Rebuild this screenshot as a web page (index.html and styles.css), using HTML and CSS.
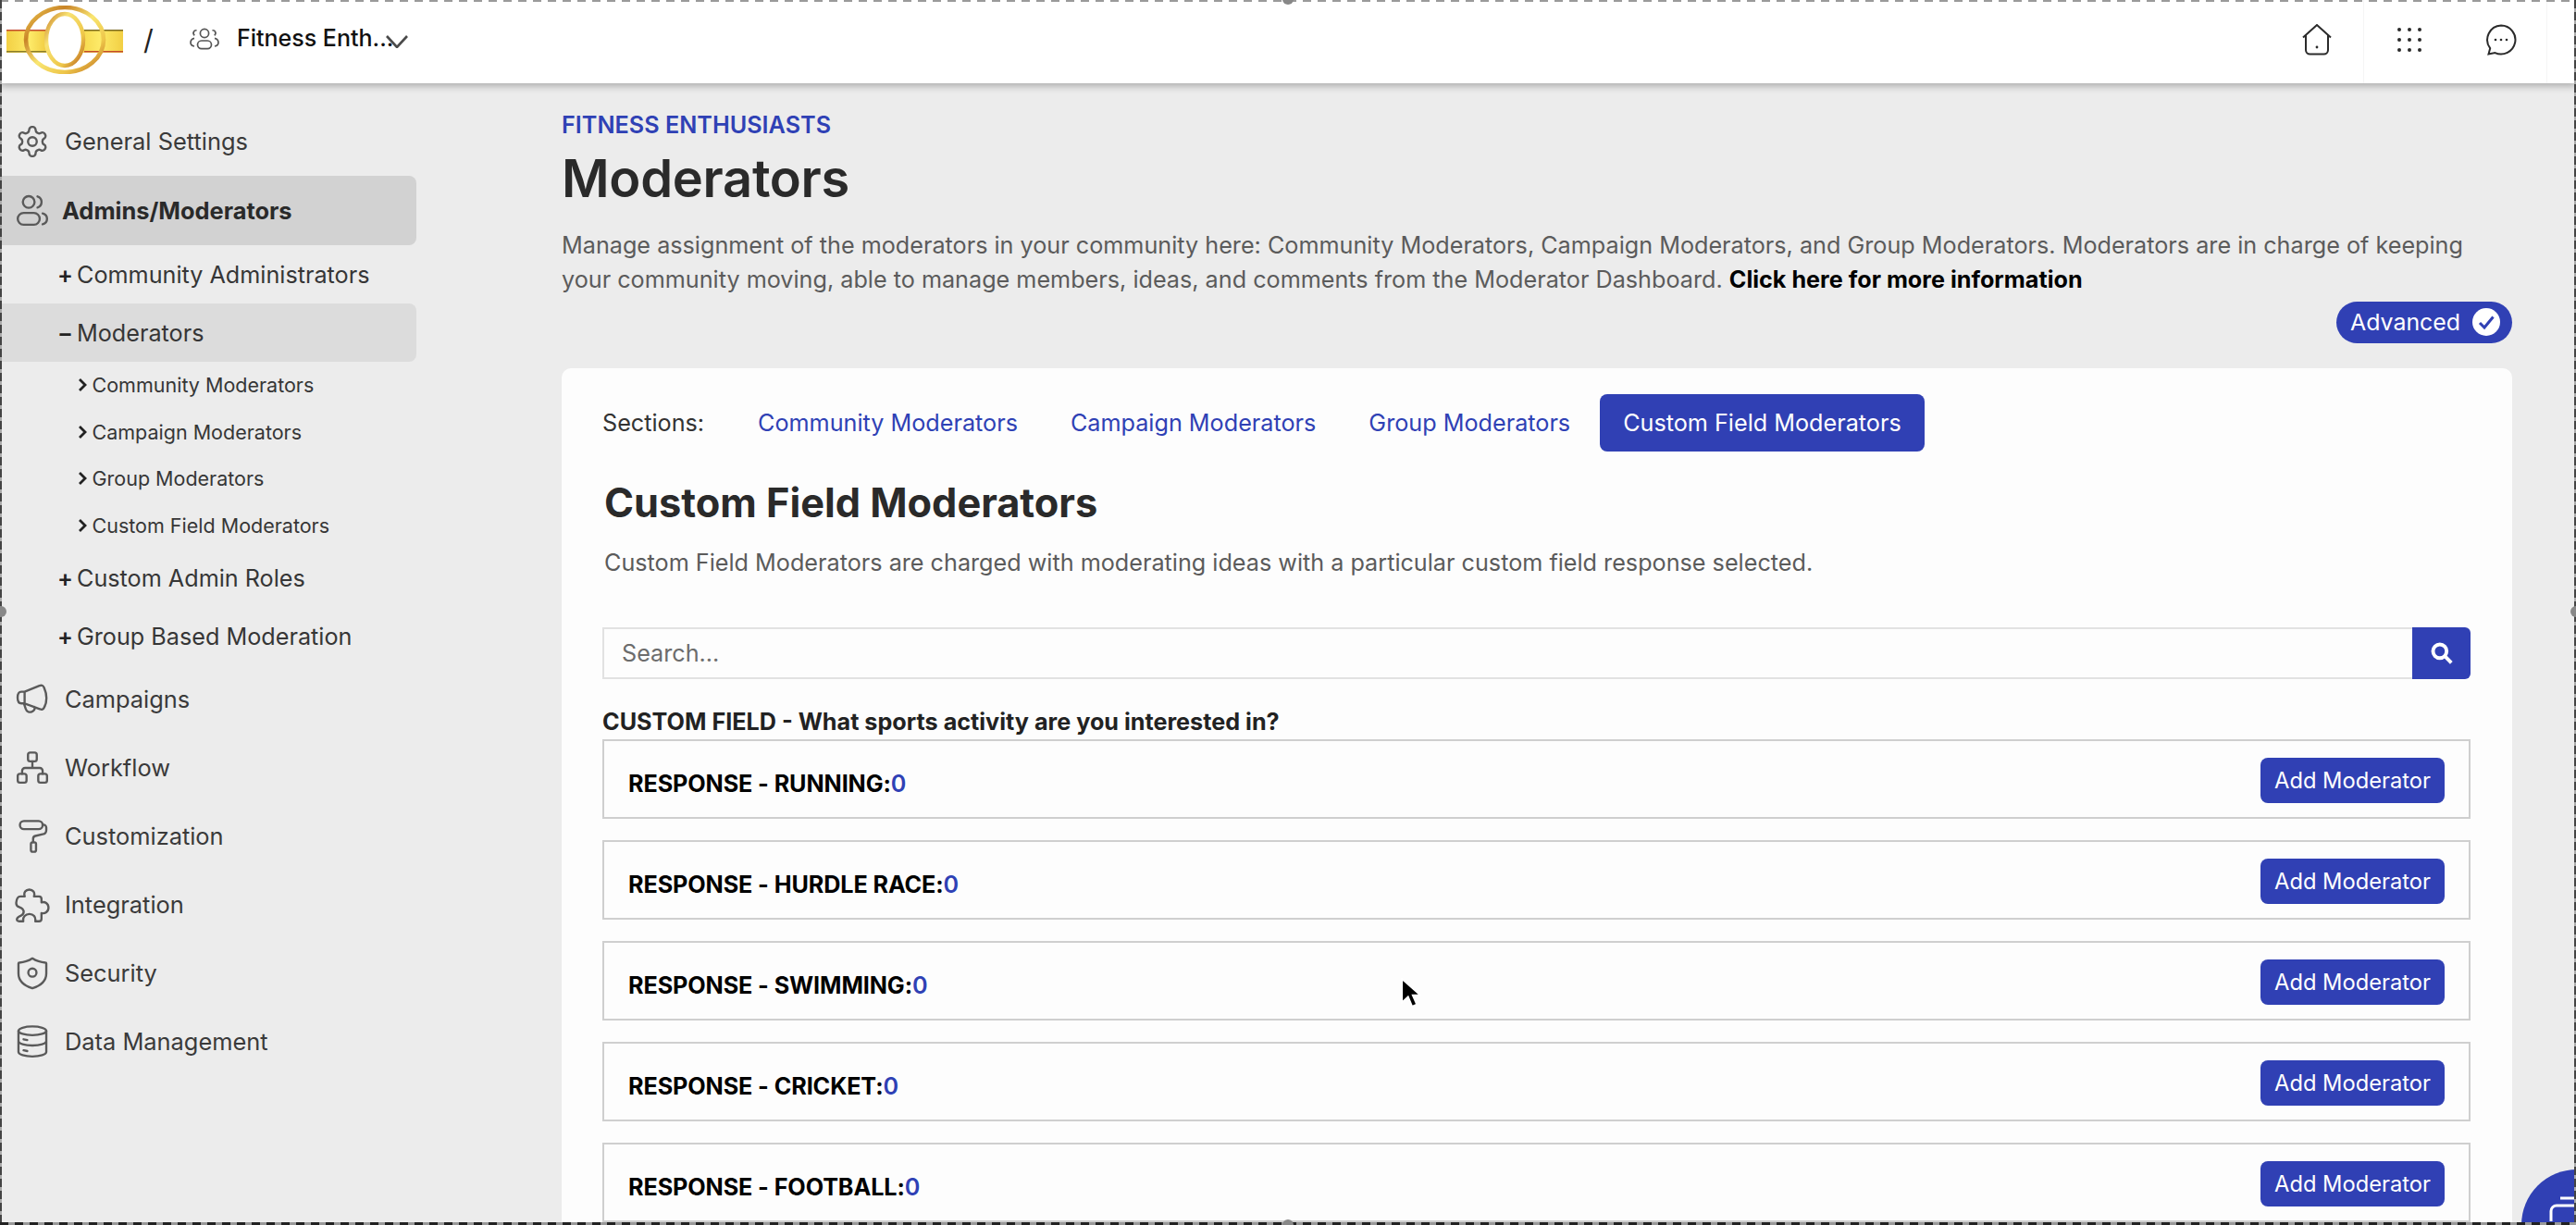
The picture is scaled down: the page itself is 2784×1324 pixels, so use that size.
FILE: index.html
```html
<!DOCTYPE html>
<html lang="en">
<head>
<meta charset="utf-8">
<title>Moderators</title>
<link rel="stylesheet" href="styles.css">
</head>
<body>
<div class="app">
  <header class="topbar">
    <div class="brand">
      <svg class="logo" viewBox="0 0 126 74" aria-hidden="true">
        <defs>
          <linearGradient id="band" x1="0" y1="0" x2="1" y2="0"><stop offset="0" stop-color="#f3d044"/><stop offset=".2" stop-color="#fdea68"/><stop offset=".33" stop-color="#f2cf46"/><stop offset=".66" stop-color="#f6da50"/><stop offset=".8" stop-color="#fdea68"/><stop offset="1" stop-color="#f2cf44"/></linearGradient>
          <linearGradient id="inner" x1="0" y1="0" x2="1" y2="1"><stop offset="0" stop-color="#c9822a"/><stop offset=".3" stop-color="#f8e272"/><stop offset=".7" stop-color="#eec74a"/><stop offset="1" stop-color="#b8611c"/></linearGradient>
          <linearGradient id="outer" x1="0" y1="0" x2="1" y2="1"><stop offset="0" stop-color="#f0cf55"/><stop offset=".25" stop-color="#c98428"/><stop offset=".5" stop-color="#f9e672"/><stop offset=".75" stop-color="#eec64a"/><stop offset="1" stop-color="#bd6c20"/></linearGradient>
        </defs>
        <rect x="0" y="26" width="126" height="25" fill="url(#band)"/>
        <rect x="0" y="26" width="43" height="1.500" fill="#c44b2c"/>
        <rect x="84" y="26" width="42" height="1.500" fill="#7c6a1e"/>
        <rect x="84" y="49" width="42" height="1.500" fill="#c44b2c"/>
        <rect x="0" y="49" width="43" height="1.500" fill="#8a7d2a"/>
        <ellipse cx="63" cy="37" rx="42" ry="35" fill="none" stroke="url(#outer)" stroke-width="4.600"/>
        <ellipse cx="63" cy="37" rx="20" ry="28" fill="#fff" stroke="url(#inner)" stroke-width="4.400"/>
      </svg>
      <span class="slash">/</span>
      <svg class="ico-group" viewBox="0 0 32 24" aria-hidden="true">
        <circle cx="16" cy="6" r="4.600"/><rect x="8.500" y="14" width="15" height="8.600" rx="4.300"/>
        <path d="M7.500 2.800a3 3 0 0 0-2.200 5.400M24.500 2.800a3 3 0 0 1 2.200 5.400M5 11.400C2.400 12 1 14 1 16c0 2 1.400 3.600 4 4M27 11.400c2.600.6 4 2.600 4 4.600 0 2-1.400 3.600-4 4"/>
      </svg>
      <span class="community">Fitness Enth...</span>
      <svg class="chev" viewBox="0 0 24 14" aria-hidden="true"><path d="M1 1l11 12L23 1"/></svg>
    </div>
    <div class="tools">
      <div class="tool tool-home">
        <svg viewBox="0 0 32 34" aria-hidden="true"><path d="M1 14.500 16 1l15 13.500M4 11.500V28a4.500 4.500 0 0 0 4.500 4.500h15A4.500 4.500 0 0 0 28 28V11.500"/><circle class="fill" cx="16" cy="25" r="1.400"/></svg>
      </div>
      <div class="tool tool-grid">
        <svg viewBox="0 0 28 28" aria-hidden="true"><g class="fill"><circle cx="3" cy="3" r="2"/><circle cx="14" cy="3" r="2"/><circle cx="25" cy="3" r="2"/><circle cx="3" cy="14" r="2"/><circle cx="14" cy="14" r="2"/><circle cx="25" cy="14" r="2"/><circle cx="3" cy="25" r="2"/><circle cx="14" cy="25" r="2"/><circle cx="25" cy="25" r="2"/></g></svg>
      </div>
      <div class="tool tool-chat">
        <svg viewBox="0 0 34 34" aria-hidden="true"><path d="M17 1.500a15.500 15.500 0 1 1-6.500 29.600L3.500 32.500l1.700-6.300A15.500 15.500 0 0 1 17 1.500z"/><g class="fill"><circle cx="11" cy="17" r="1.300"/><circle cx="17" cy="17" r="1.300"/><circle cx="23" cy="17" r="1.300"/></g></svg>
      </div>
    </div>
  </header>

  <div class="body">
    <nav class="sidebar">
      <a class="top-item">
        <svg class="nav-ico" viewBox="0 0 24 24" aria-hidden="true"><path d="M12.220 2h-.44a2 2 0 0 0-2 2v.18a2 2 0 0 1-1 1.730l-.43.25a2 2 0 0 1-2 0l-.15-.08a2 2 0 0 0-2.730.73l-.22.38a2 2 0 0 0 .73 2.730l.15.1a2 2 0 0 1 1 1.720v.51a2 2 0 0 1-1 1.740l-.15.09a2 2 0 0 0-.73 2.730l.22.38a2 2 0 0 0 2.730.73l.15-.08a2 2 0 0 1 2 0l.43.25a2 2 0 0 1 1 1.730V20a2 2 0 0 0 2 2h.44a2 2 0 0 0 2-2v-.18a2 2 0 0 1 1-1.730l.43-.25a2 2 0 0 1 2 0l.15.08a2 2 0 0 0 2.730-.73l.22-.39a2 2 0 0 0-.73-2.730l-.15-.08a2 2 0 0 1-1-1.740v-.5a2 2 0 0 1 1-1.740l.15-.09a2 2 0 0 0 .73-2.730l-.22-.38a2 2 0 0 0-2.730-.73l-.15.08a2 2 0 0 1-2 0l-.43-.25a2 2 0 0 1-1-1.730V4a2 2 0 0 0-2-2z"/><circle cx="12" cy="12" r="3"/></svg>
        <span>General Settings</span>
      </a>
      <a class="top-item active">
        <svg class="nav-ico" viewBox="0 0 24 24" aria-hidden="true"><circle cx="9.500" cy="6.500" r="4"/><rect x="2" y="14" width="15" height="8" rx="4"/><path d="M15.500 2.700a4 4 0 0 1 0 7.600M19 14.300c2 .5 3 2 3 3.700 0 1.700-1 3.200-3 3.700"/></svg>
        <span>Admins/Moderators</span>
      </a>
      <a class="sub-item"><i class="mark">+</i><span>Community Administrators</span></a>
      <a class="sub-item current"><i class="mark">−</i><span>Moderators</span></a>
      <a class="leaf"><svg class="leaf-chev" viewBox="0 0 10 16" aria-hidden="true"><path d="M2 2l6 6-6 6"/></svg><span>Community Moderators</span></a>
      <a class="leaf"><svg class="leaf-chev" viewBox="0 0 10 16" aria-hidden="true"><path d="M2 2l6 6-6 6"/></svg><span>Campaign Moderators</span></a>
      <a class="leaf"><svg class="leaf-chev" viewBox="0 0 10 16" aria-hidden="true"><path d="M2 2l6 6-6 6"/></svg><span>Group Moderators</span></a>
      <a class="leaf"><svg class="leaf-chev" viewBox="0 0 10 16" aria-hidden="true"><path d="M2 2l6 6-6 6"/></svg><span>Custom Field Moderators</span></a>
      <a class="sub-item"><i class="mark">+</i><span>Custom Admin Roles</span></a>
      <a class="sub-item"><i class="mark">+</i><span>Group Based Moderation</span></a>
      <a class="top-item">
        <svg class="nav-ico" viewBox="0 0 24 24" aria-hidden="true"><path d="M6.700 6.700 16.800 2.600C18.500 2 19.500 2.500 20 4c1 2.300 1.600 4.500 1.600 7s-.6 4.700-1.600 6.500c-.6 1.300-1.500 1.700-3 1L6.700 14.700zM6.700 6.700H4.500c-1.700 0-2.600 1.800-2.600 4s.9 4 2.600 4h2.200M6.200 14.700l1.300 3.800c.5 1.800 2.300 2.500 4 1.900 1.700-.6 2.500-1.900 1.800-3.400"/></svg>
        <span>Campaigns</span>
      </a>
      <a class="top-item">
        <svg class="nav-ico" viewBox="0 0 24 24" aria-hidden="true"><rect x="9" y="1.500" width="6" height="6" rx="1.500"/><rect x="2" y="16" width="6" height="6" rx="1.500"/><rect x="16" y="16" width="6" height="6" rx="1.500"/><path d="M12 7.500V12M5 16v-2a2 2 0 0 1 2-2h10a2 2 0 0 1 2 2v2"/></svg>
        <span>Workflow</span>
      </a>
      <a class="top-item">
        <svg class="nav-ico" viewBox="0 0 24 24" aria-hidden="true"><rect x="3.500" y="1.500" width="15.500" height="5.500" rx="2.750"/><path d="M19 4h.5a2 2 0 0 1 2 2v1.500a3 3 0 0 1-2.500 3l-5 1.200a2 2 0 0 0-1.500 2V16"/><rect x="11" y="16" width="3.500" height="6.500" rx="1.200"/></svg>
        <span>Customization</span>
      </a>
      <a class="top-item">
        <svg class="nav-ico" viewBox="0 0 24 24" aria-hidden="true"><path d="M6.800 6.200C5.800 3.500 7.500 1.600 9.900 1.600S14 3.500 13.100 6.200h3.400c1.100 0 1.700.6 1.700 1.700v2.400c2.300-.8 4.800.7 4.800 3.600 0 2.800-2.500 4.400-4.800 3.700v3.900c0 1.100-.6 1.700-1.700 1.700H14c.5-2.900-1.300-5-4-5s-4.700 2.100-4.200 5H3c-1.200 0-1.800-.7-1.500-1.700.3-1 1.500-1.700 2.700-2.200 1.300-.6 2-1.800 1.800-3-.2-1.600-1.500-2.300-3-2.800-1.500-.5-2.200-1.700-2-3.200.2-2.100.8-4.100 2.800-4.100z"/></svg>
        <span>Integration</span>
      </a>
      <a class="top-item">
        <svg class="nav-ico" viewBox="0 0 24 24" aria-hidden="true"><path d="M12 1.800c2.500 1.700 5.500 2.700 9 2.900.3 0 .5.2.5.5V12c0 5.300-4 8.500-9.500 10.200C6.500 20.500 2.500 17.300 2.500 12V5.200c0-.3.200-.5.500-.5 3.500-.2 6.500-1.200 9-2.900z"/><circle cx="12" cy="11.500" r="2.800"/></svg>
        <span>Security</span>
      </a>
      <a class="top-item">
        <svg class="nav-ico" viewBox="0 0 24 24" aria-hidden="true"><ellipse cx="12" cy="4.500" rx="9.500" ry="3"/><path d="M2.500 4.500V19c0 1.700 4.300 3 9.500 3s9.500-1.300 9.500-3V4.500M2.500 11.500c0 1.700 4.300 3 9.500 3s9.500-1.300 9.500-3M6 10.300l2.500.5M6 17.800l2.500.5"/></svg>
        <span>Data Management</span>
      </a>
    </nav>

    <main class="main">
      <div class="eyebrow">FITNESS ENTHUSIASTS</div>
      <h1 class="title">Moderators</h1>
      <p class="intro">Manage assignment of the moderators in your community here: Community Moderators, Campaign Moderators, and Group Moderators. Moderators are in charge of keeping your community moving, able to manage members, ideas, and comments from the Moderator Dashboard. <a class="more">Click here for more information</a></p>
      <div class="adv-row">
        <div class="adv-pill">
          <span>Advanced</span>
          <svg class="adv-check" viewBox="0 0 30 30" aria-hidden="true"><circle cx="15" cy="15" r="15"/><path d="M8 16l5 5L22.500 9.500"/></svg>
        </div>
      </div>

      <section class="card">
        <div class="tabs">
          <span class="tabs-label">Sections:</span>
          <a class="tab">Community Moderators</a>
          <a class="tab">Campaign Moderators</a>
          <a class="tab">Group Moderators</a>
          <a class="tab tab-active">Custom Field Moderators</a>
        </div>
        <h2 class="heading">Custom Field Moderators</h2>
        <p class="lead">Custom Field Moderators are charged with moderating ideas with a particular custom field response selected.</p>
        <div class="search">
          <div class="search-input">Search...</div>
          <div class="search-btn">
            <svg viewBox="0 0 24 24" aria-hidden="true"><circle cx="10" cy="10" r="6.800"/><path d="M15.200 15.200L21.500 21.500"/></svg>
          </div>
        </div>
        <div class="field-label">CUSTOM FIELD - What sports activity are you interested in?</div>
        <div class="rows">
          <div class="row"><div class="row-label">RESPONSE - RUNNING:<span class="count">0</span></div><a class="add-btn">Add Moderator</a></div>
          <div class="row"><div class="row-label">RESPONSE - HURDLE RACE:<span class="count">0</span></div><a class="add-btn">Add Moderator</a></div>
          <div class="row"><div class="row-label">RESPONSE - SWIMMING:<span class="count">0</span></div><a class="add-btn">Add Moderator</a></div>
          <div class="row"><div class="row-label">RESPONSE - CRICKET:<span class="count">0</span></div><a class="add-btn">Add Moderator</a></div>
          <div class="row"><div class="row-label">RESPONSE - FOOTBALL:<span class="count">0</span></div><a class="add-btn">Add Moderator</a></div>
        </div>
      </section>
    </main>
  </div>
</div>

<div class="chat-fab">
  <svg viewBox="0 0 60 60" aria-hidden="true"><path d="M42 31h18M32 56V45a6 6 0 0 1 6-6h22"/></svg>
</div>
<svg class="cursor" viewBox="0 0 20 30" aria-hidden="true"><path d="M2 1v23l6-5.500 4 9.500 4.500-2-4-9H20z"/></svg>
<div class="marquee m-top"></div>
<div class="marquee m-left"></div>
<div class="marquee m-right"></div>
<div class="marquee m-bottom"></div>
<i class="handle h-top"></i>
<i class="handle h-left"></i>
<i class="handle h-right"></i>
<i class="handle h-bottom"></i>
</body>
</html>
```
FILE: styles.css
```css
* { box-sizing: border-box; }
html, body { margin: 0; height: 1324px; overflow: hidden; }
body {
  background: #ececec;
  font-family: Inter, "Noto Sans", "Liberation Sans", sans-serif;
  color: #2b2b2b;
  font-size: 25.2px;
}
svg { display: block; }
.app { height: 1324px; overflow: hidden; display: flex; flex-direction: column; }

/* top bar */
.topbar {
  flex: none;
  height: 90px;
  background: #fff;
  display: flex;
  justify-content: space-between;
  box-shadow: 0 3px 8px rgba(0,0,0,.28);
  position: relative;
  z-index: 2;
}
.brand { display: flex; align-items: center; padding-left: 7px; }
.logo { width: 126px; height: 74px; margin-top: -4px; }
.slash { font-size: 30px; color: #222; margin-left: 22px; margin-top: -4px; width: 50px; }
.ico-group { width: 32px; height: 24px; fill: none; stroke: #555; stroke-width: 1.7; margin-top: -6px; }
.community { margin-left: 19px; color: #111; font-size: 25px; font-weight: 500; margin-top: -8px; width: 161px; white-space: nowrap; }
.chev { width: 24px; height: 14px; fill: none; stroke: #4a4a4a; stroke-width: 2.6; margin-top: -1px; }
.tools { display: flex; padding-right: 31px; }
.tool { display: flex; align-items: center; justify-content: center; padding-bottom: 4px; }
.tool svg { fill: none; stroke: #2b2b2b; stroke-width: 2; }
.tool svg .fill { fill: #2b2b2b; stroke: none; }
.tool-home { width: 100px; }
.tool-home svg { width: 32px; height: 34px; }
.tool-grid { border-left: 1px solid #f5f5f5; width: 99px; }
.tool-grid svg { width: 28px; height: 28px; }
.tool-chat { width: 100px; border-right: 1px solid #f5f5f5; }
.tool-chat svg { width: 34px; height: 34px; }

.body { flex: 1; display: flex; min-height: 0; }

/* sidebar */
.sidebar { flex: none; width: 450px; padding-top: 26px; }
.top-item {
  display: flex;
  align-items: center;
  height: 74px;
  padding-left: 16px;
  padding-bottom: 1px;
  gap: 16px;
  color: #3a3a3a;
  font-size: 25.4px;
}
.top-item.active { height: 75px; background: #d2d2d2; border-radius: 0 8px 8px 0; margin-left: 2px; padding-left: 14px; font-weight: 700; color: #2a2a2a; gap: 13px; }
.nav-ico { flex: none; width: 38px; height: 38px; fill: none; stroke: #5a5a5a; stroke-width: 1.5; stroke-linecap: round; stroke-linejoin: round; }
.sub-item {
  display: flex;
  align-items: center;
  height: 63px;
  padding-left: 62px;
  color: #363636;
}
.sub-item:last-of-type { height: 62px; }
.sub-item.current { background: #dcdcdc; border-radius: 0 8px 8px 0; margin-left: 2px; padding-left: 60px; }
.mark { font-style: normal; width: 21px; font-weight: 600; color: #222; flex: none; }
.leaf {
  display: flex;
  align-items: center;
  height: 50.5px;
  padding-left: 84px;
  color: #363636;
  font-size: 21.5px;
}
.leaf-chev { flex: none; width: 10px; height: 16px; margin-right: 5.5px; fill: none; stroke: #222; stroke-width: 2.8; }

/* main */
.main { flex: none; width: 2108px; margin-left: 157px; padding-top: 30px; }
.eyebrow { line-height: 30px; color: #2f41b5; font-weight: 600; }
.title { margin: 9px 0 0; font-size: 56px; line-height: 68px; font-weight: 600; letter-spacing: -.3px; color: #2a2a2a; }
.intro { margin: 19.5px 0 0; line-height: 37px; color: #5b5b5b; width: 2090px; }
.more { color: #000; font-weight: 700; }
.adv-row { display: flex; justify-content: flex-end; margin-top: 5px; }
.adv-pill {
  height: 45px;
  width: 190px;
  background: #3040b4;
  color: #fff;
  border-radius: 23px;
  display: flex;
  align-items: center;
  justify-content: space-between;
  padding: 0 13px 0 15px;
  font-size: 24.9px;
}
.adv-check { width: 30px; height: 30px; }
.adv-check circle { fill: #fff; }
.adv-check path { fill: none; stroke: #3040b4; stroke-width: 3; }

.card {
  margin-top: 27.5px;
  background: #fdfdfd;
  border-radius: 10px 10px 0 0;
  padding: 28px 45px 0 44px;
}
.tabs { display: flex; align-items: center; height: 62px; gap: 7px; }
.tabs-label { width: 136px; color: #333; }
.tab { padding: 0 25px; height: 62px; display: flex; align-items: center; color: #2f41b5; border-radius: 8px; white-space: nowrap; }
.tab-active { background: #3040b4; color: #fff; }
.heading { margin: 29px 0 0 2px; font-size: 43.3px; line-height: 52px; font-weight: 700; color: #2a2a2a; }
.lead { margin: 21px 0 0 2px; line-height: 37px; color: #5b5b5b; }
.search { display: flex; height: 56px; margin-top: 50.5px; }
.search-input { flex: 1; border: 2px solid #e2e2e2; border-right: none; padding-left: 19px; display: flex; align-items: center; color: #6c6c6c; }
.search-btn { flex: none; width: 63px; background: #3040b4; border-radius: 0 6px 6px 0; display: flex; align-items: center; justify-content: center; }
.search-btn svg { width: 26px; height: 26px; fill: none; stroke: #fff; stroke-width: 3.6; }
.field-label { margin-top: 31px; line-height: 30px; font-weight: 700; color: #222; }
.rows { margin-top: 4px; display: flex; flex-direction: column; gap: 23px; }
.row { flex: none; height: 86px; border: 2px solid #cfcfcf; display: flex; justify-content: space-between; align-items: flex-start; padding: 18px 26px 0; }
.row-label { margin-top: 10px; line-height: 36px; font-weight: 700; color: #000; letter-spacing: -.1px; }
.count { color: #2f41b5; font-weight: 600; }
.add-btn { height: 49px; width: 199px; background: #3040b4; color: #fff; border-radius: 8px; display: flex; align-items: center; justify-content: center; white-space: nowrap; font-size: 23.7px; }

/* overlays: chat launcher, pointer, capture marquee */
.chat-fab { position: fixed; left: 2725px; top: 1264px; width: 120px; height: 120px; border-radius: 50%; background: #3040b4; z-index: 5; }
.chat-fab svg { width: 60px; height: 60px; fill: none; stroke: #fff; stroke-width: 3; }
.cursor { position: fixed; left: 1513px; top: 1057px; width: 22px; height: 33px; fill: #000; stroke: #fff; stroke-width: 1.6; z-index: 6; }
.marquee { position: fixed; z-index: 7; }
.m-top { left: 0; right: 0; top: 0; height: 2px; background: repeating-linear-gradient(90deg, #9a9a9a 0 9px, transparent 9px 16px); }
.m-bottom { left: 0; right: 0; bottom: 0; height: 3px; background: repeating-linear-gradient(90deg, #222 0 9px, #999 9px 16px); }
.m-left { left: 0; top: 0; bottom: 0; width: 2px; background: repeating-linear-gradient(180deg, #444 0 9px, #aaa 9px 13px); }
.m-right { right: 0; top: 0; bottom: 0; width: 2px; background: repeating-linear-gradient(180deg, #444 0 9px, #aaa 9px 13px); }
.handle { position: fixed; width: 12px; height: 12px; border-radius: 50%; background: #888; z-index: 8; }
.h-top { left: 1386px; top: -7px; }
.h-bottom { left: 1386px; top: 1318px; }
.h-left { left: -5px; top: 655px; }
.h-right { left: 2778px; top: 655px; }
```
